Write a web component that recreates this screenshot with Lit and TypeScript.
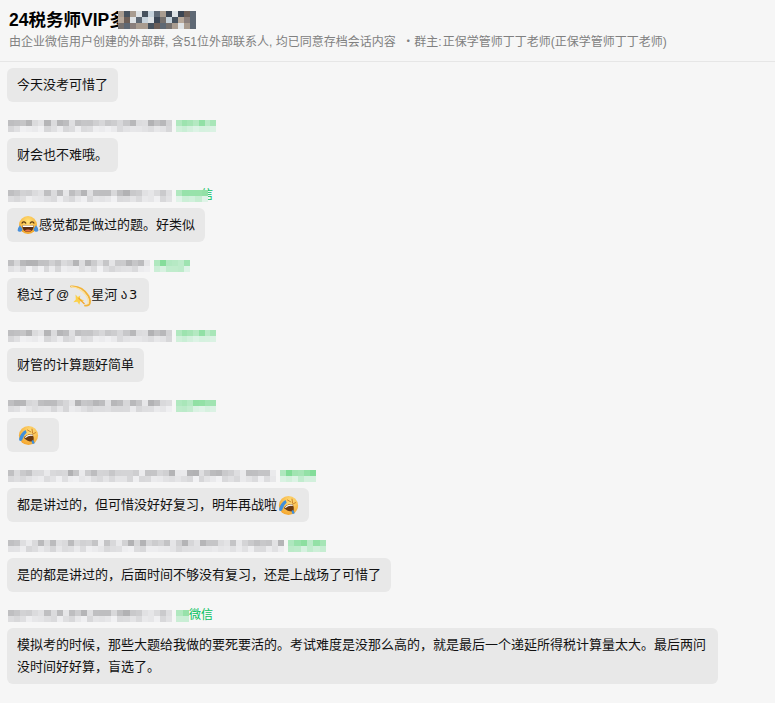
import { LitElement, html, css } from "lit";
import { customElement, property } from "lit/decorators.js";

function rng(seed: number) {
  let s = seed;
  return () => {
    s = (s * 1664525 + 1013904223) >>> 0;
    return (s >>> 16) / 65535;
  };
}

@customElement("mosaic-strip")
class MosaicStrip extends LitElement {
  @property({ type: Number }) size = 60;
  @property({ type: Number }) rows = 2;
  @property({ type: Number }) seed = 1;
  @property() tone = "gray";
  static styles = css`
    :host { display: inline-block; flex: none; position: relative; }
    .row { display: flex; height: 6px; }
    .cell { flex: 1 1 0; height: 6px; }
  `;
  colour(r: () => number, row: number) {
    const v = r();
    if (this.tone === "green") {
      const p = row === 0 ? 0.35 + v * 0.65 : v * 0.4;
      const a = [226, 244, 234], b = [128, 220, 150];
      return `rgb(${a.map((c, i) => Math.round(c + (b[i] - c) * p)).join(",")})`;
    }
    if (this.tone === "photo") {
      const pal = ["#3c4654", "#6d5f58", "#a99c90", "#c7d3dc", "#5e6874", "#8a7f7c", "#b8a99b", "#47525e", "#dfe3e6", "#75706e"];
      return pal[Math.floor(v * pal.length) % pal.length];
    }
    const g = row === 0 ? 176 + v * 60 : 214 + v * 28;
    const t = Math.round(g);
    return `rgb(${t},${t},${t + 2})`;
  }
  render() {
    const r = rng(this.seed);
    const cols = Math.round(this.size / 6);
    return html`<div style="width:${this.size}px">${Array.from({ length: this.rows }, (_, y) =>
      html`<div class="row">${Array.from({ length: cols }, () =>
        html`<span class="cell" style="background:${this.colour(r, y)}"></span>`)}</div>`)}</div>`;
  }
}

const tearJoy = html`<svg class="emoji" viewBox="0 0 22 20" width="22" height="21" aria-hidden="true">
  <defs><radialGradient id="f1" cx="50%" cy="30%" r="70%"><stop offset="0" stop-color="#ffe27a"/><stop offset="1" stop-color="#f4a52a"/></radialGradient></defs>
  <circle cx="11" cy="9.500" r="9" fill="url(#f1)"/>
  <path d="M5 7.600q1.800-2.400 3.800 0M13.200 7.600q1.900-2.400 3.800 0" fill="none" stroke="#5d3a10" stroke-width="1.200" stroke-linecap="round"/>
  <path d="M5.200 10h11.600q0 6.300-5.800 6.300T5.200 10z" fill="#5b2c10"/>
  <path d="M5.500 10h11l-.3 1.500H5.800z" fill="#fff"/>
  <path d="M7.500 15q3.500-2 7 0q-3.500 2-7 0z" fill="#e8734a"/>
  <path d="M3 9.800q-2.600 3-2.400 5.100q.6 1.700 2.900 1.400q2.200-.6 2-2.800zM19 9.800q2.600 3 2.400 5.100q-.6 1.700-2.900 1.400q-2.200-.6-2-2.800z" fill="#4a90d9"/>
</svg>`;

const rofl = html`<svg class="emoji" viewBox="0 0 22 20" width="22" height="21" aria-hidden="true">
  <defs><radialGradient id="f2" cx="60%" cy="30%" r="75%"><stop offset="0" stop-color="#ffdf7c"/><stop offset="1" stop-color="#f4a32a"/></radialGradient></defs>
  <circle cx="11.500" cy="10" r="9.600" fill="url(#f2)"/>
  <path d="M10.500 4.500l3.400 2M15 3.600l.6 4M16 8.500l2.600-1.400" fill="none" stroke="#c9812a" stroke-width="1" stroke-linecap="round"/>
  <path d="M7 12.400q3-4.400 8.800-3.400q1.600 3.400.6 7q-5.600.6-9.400-3.600z" fill="#6b3a12"/>
  <path d="M7.800 11.800q3-3.500 7.800-2.600l.2 1.200q-4.200-.9-7.200 2.200z" fill="#fff"/>
  <path d="M8.500 4.600Q3.200 8 2.100 13.600q-.2 2 1.400 2q1.600-.2 2.100-2Q6.700 9.400 9.700 7z" fill="#3f8fdc"/>
  <path d="M16 14.400q1.600 1.800 1.600 3.600l-2 .6q-.9-1.600-1-3.400z" fill="#3f8fdc"/>
</svg>`;

const dizzy = html`<svg class="emoji big" viewBox="0 0 22 22" width="22" height="22" aria-hidden="true">
  <path d="M2 1.500Q13 .5 19.500 11q3 6 .3 8.800q-1.400 1.200-3.800.8" fill="none" stroke="#f2b43a" stroke-width="1.800" stroke-linecap="round"/>
  <path d="M2 1.500q9 1 15 9q3.500 5.500 1.800 8.500" fill="none" stroke="#ffe39a" stroke-width="1.200"/>
  <path d="M6.500 9.500l2.400 2.600 2.400-1.600-.4 3 4.400 2.300-4 .5-1 3.400-2-3-4 .5 2.500-2.800z" fill="#fbd14b"/>
  <path d="M9.500 13l6 6" stroke="#f3a62f" stroke-width="1.200" fill="none"/>
</svg>`;

interface Msg {
  gray?: number; green?: number; seed?: number; tail?: string; body: any; pad?: boolean;
}

const msgs: Msg[] = [
  { body: "今天没考可惜了" },
  { gray: 164, green: 40, seed: 11, body: "财会也不难哦。" },
  { gray: 164, green: 32, seed: 23, tail: "over", body: html`${tearJoy}感觉都是做过的题。好类似` },
  { gray: 142, green: 36, seed: 37, body: html`稳过了@${dizzy}星河 <span class="glyph">ა3</span>` },
  { gray: 164, green: 40, seed: 11, body: "财管的计算题好简单" },
  { gray: 164, green: 40, seed: 53, body: rofl, pad: true },
  { gray: 268, green: 36, seed: 71, body: html`都是讲过的，但可惜没好好复习，明年再战啦${rofl}` },
  { gray: 276, green: 38, seed: 89, body: "是的都是讲过的，后面时间不够没有复习，还是上战场了可惜了" },
  { gray: 164, green: 13, seed: 23, tail: "text", body: "模拟考的时候，那些大题给我做的要死要活的。考试难度是没那么高的，就是最后一个递延所得税计算量太大。最后两问没时间好好算，盲选了。" },
];

@customElement("app-root")
class AppRoot extends LitElement {
  static styles = css`
    :host {
      display: block; width: 775px; height: 703px; overflow: hidden; box-sizing: border-box;
      background: #f6f6f6; color: #111;
      font-family: "Liberation Sans", "Noto Sans CJK SC", sans-serif;
    }
    .head { height: 62px; box-sizing: border-box; padding: 10px 9px 0; border-bottom: 1px solid #e6e6e6; }
    .title { display: flex; align-items: flex-start; height: 20px; line-height: 20px; font-size: 17.5px; font-weight: 700; color: #000; white-space: nowrap; }
    .title mosaic-strip { margin-top: 1px; margin-left: -9px; }
    .sub { margin-top: 3px; font-size: 12px; line-height: 18px; color: #808080; white-space: pre; }
    .list { display: flex; flex-direction: column; align-items: flex-start; padding: 6px 7px 0; }
    .item { display: flex; flex-direction: column; align-items: flex-start; margin-top: 16px; }
    .item:first-child { margin-top: 0; }
    .meta { display: flex; align-items: flex-end; height: 14px; margin-bottom: 6px; margin-left: 1px; }
    .gap { width: 4px; flex: none; }
    .green-text { font-size: 12px; line-height: 14px; color: #07c160; white-space: nowrap; }
    .under { margin-left: -7px; }
    .bubble {
      box-sizing: border-box; max-width: 711px; min-height: 34px; padding: 6px 10px; border-radius: 6px;
      background: #e8e8e8; font-size: 13px; line-height: 22px; color: #111;
    }
    .emoji { vertical-align: -3px; margin: -4px 0; }
    .emoji.big { vertical-align: -4px; }
    .glyph { font-family: "DejaVu Sans", sans-serif; font-size: 13px; letter-spacing: 1.5px; }
    .wide { min-width: 52px; }
  `;

  meta(m: Msg) {
    if (!m.gray) return null;
    return html`<div class="meta">
      <mosaic-strip size=${m.gray} seed=${m.seed}></mosaic-strip>
      <span class="gap"></span>
      <mosaic-strip size=${m.green!} tone="green" seed=${(m.seed ?? 0) + 3}></mosaic-strip>
      ${m.tail === "text" ? html`<span class="green-text">微信</span>` : null}
      ${m.tail === "over" ? html`<span class="green-text under">信</span>` : null}
    </div>`;
  }

  render() {
    return html`
      <header class="head">
        <div class="title">24税务师VIP多<mosaic-strip size="78" rows="3" seed="5" tone="photo"></mosaic-strip></div>
        <div class="sub">由企业微信用户创建的外部群, 含51位外部联系人, 均已同意存档会话内容  ・群主:\u200a正保学管师丁丁老师(正保学管师丁丁老师)</div>
      </header>
      <main class="list">
        ${msgs.map((m) => html`<div class="item">${this.meta(m)}<div class="bubble ${m.pad ? "wide" : ""}">${m.body}</div></div>`)}
      </main>`;
  }
}
void MosaicStrip; void AppRoot;
